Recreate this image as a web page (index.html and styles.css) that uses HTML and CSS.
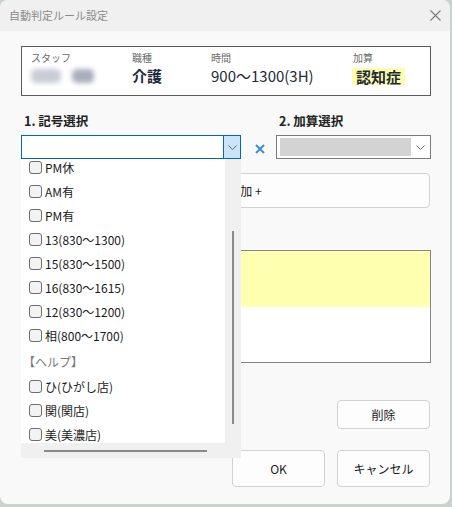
FILE: index.html
```html
<!DOCTYPE html>
<html lang="ja">
<head>
<meta charset="utf-8">
<title>自動判定ルール設定</title>
<link rel="stylesheet" href="styles.css">
</head>
<body>
<div class="window">
  <div class="titlebar">
    <span class="title">自動判定ルール設定</span>
    <svg class="close" width="11" height="11" viewBox="0 0 11 11"><path d="M0.5 0.5 L10.5 10.5 M10.5 0.5 L0.5 10.5" stroke="#7a7a7a" stroke-width="1.1" fill="none"/></svg>
  </div>
  <div class="content">
    <div class="info">
      <div class="col">
        <div class="lbl">スタッフ</div>
        <div class="val"><span class="blur b1"></span><span class="blur b2"></span></div>
      </div>
      <div class="col">
        <div class="lbl">職種</div>
        <div class="val bold">介護</div>
      </div>
      <div class="col">
        <div class="lbl">時間</div>
        <div class="val">900〜1300(3H)</div>
      </div>
      <div class="col">
        <div class="lbl">加算</div>
        <div class="val bold"><span class="hl">認知症</span></div>
      </div>
    </div>

    <div class="selectors">
      <div class="sel-label">1. 記号選択</div>
      <div></div>
      <div class="sel-label">2. 加算選択</div>
      <div class="combo active">
        <div class="combo-field"></div>
        <div class="combo-btn"><svg width="9" height="5" viewBox="0 0 9 5"><path d="M0.5 0.5 L4.5 4.5 L8.5 0.5" stroke="#5f6b78" stroke-width="1" fill="none"/></svg></div>
      </div>
      <div class="clear"><svg width="10" height="10" viewBox="0 0 10 10"><path d="M1 1 L9 9 M9 1 L1 9" stroke="#3c8fdc" stroke-width="2" fill="none"/></svg></div>
      <div class="combo">
        <div class="combo-field"><div class="placeholder"></div></div>
        <div class="combo-btn plain"><svg width="9" height="5" viewBox="0 0 9 5"><path d="M0.5 0.5 L4.5 4.5 L8.5 0.5" stroke="#6a6a6a" stroke-width="1" fill="none"/></svg></div>
      </div>
    </div>

    <button class="btn add">追加 +</button>

    <div class="listbox">
      <div class="lrow yellow"></div>
    </div>

    <div class="actions single">
      <button class="btn small">削除</button>
    </div>

    <div class="actions pair">
      <button class="btn big">OK</button>
      <button class="btn big">キャンセル</button>
    </div>
  </div>

  <div class="dropdown">
    <div class="dd-list">
      <div class="dd-items">
        <div class="item"><span class="cb"></span><span>PM休</span></div>
        <div class="item"><span class="cb"></span><span>AM有</span></div>
        <div class="item"><span class="cb"></span><span>PM有</span></div>
        <div class="item"><span class="cb"></span><span>13(830〜1300)</span></div>
        <div class="item"><span class="cb"></span><span>15(830〜1500)</span></div>
        <div class="item"><span class="cb"></span><span>16(830〜1615)</span></div>
        <div class="item"><span class="cb"></span><span>12(830〜1200)</span></div>
        <div class="item"><span class="cb"></span><span>相(800〜1700)</span></div>
        <div class="group">【ヘルプ】</div>
        <div class="item"><span class="cb"></span><span>ひ(ひがし店)</span></div>
        <div class="item"><span class="cb"></span><span>関(関店)</span></div>
        <div class="item"><span class="cb"></span><span>美(美濃店)</span></div>
      </div>
    </div>
    <div class="vscroll"><div class="vthumb"></div></div>
    <div class="hscroll"><div class="hthumb"></div></div>
    <div class="corner"></div>
  </div>
</div>
</body>
</html>
```

FILE: styles.css
```css
* { box-sizing: border-box; }

html, body {
  margin: 0;
  padding: 0;
}

body {
  width: 452px;
  height: 507px;
  background: #c9d2cc;
  font-family: "Noto Sans CJK JP", "Noto Sans", sans-serif;
  color: #1a1a1a;
  overflow: hidden;
}

.window {
  position: relative;
  width: 450px;
  height: 504px;
  background: #f9f9f9;
  border-radius: 8px;
  overflow: hidden;
}

.titlebar {
  height: 31px;
  background: #f0f0f0;
  display: flex;
  align-items: center;
  justify-content: space-between;
  padding: 0 9px 1px 9px;
}

.title {
  font-size: 11px;
  color: #8a8a8a;
  line-height: 14px;
  letter-spacing: 0;
}

.close {
  display: block;
  margin-right: 0;
}

.content {
  padding: 0 19px 0 21px;
  display: flex;
  flex-direction: column;
}

/* info box */
.info {
  margin-top: 15px;
  height: 50px;
  border: 1px solid #5c5c5c;
  background: #ffffff;
  display: grid;
  grid-template-columns: 101px 79px 142px 1fr;
  padding: 5px 0 0 9px;
}

.lbl {
  font-size: 10px;
  line-height: 12px;
  color: #6a6a6a;
}

.val {
  margin-top: 2px;
  height: 20px;
  font-size: 15px;
  line-height: 20px;
  color: #1f2b3c;
  display: flex;
  align-items: center;
  gap: 11px;
}

.val.bold { font-weight: 700; }

.blur {
  display: inline-block;
  height: 14px;
  border-radius: 5px;
  filter: blur(2.5px);
}
.b1 { width: 30px; background: #c9ccd6; }
.b2 { width: 22px; background: #a9aebb; }

.hl {
  display: inline-block;
  background: #ffffab;
  line-height: 17px;
  padding: 0 4px 0 4px;
  margin-left: -1px;
}

/* selectors */
.selectors {
  margin-top: 17px;
  display: grid;
  grid-template-columns: 220px 35px 155px;
  row-gap: 6px;
}

.sel-label {
  font-size: 12.5px;
  font-weight: 700;
  line-height: 16px;
  padding-left: 3px;
  color: #222;
}

.combo {
  height: 24px;
  border: 1px solid #7a7a7a;
  background: #ffffff;
  display: flex;
}

.combo.active { border-color: #0067c0; }

.combo-field {
  flex: 1;
  padding: 2px 3px;
}

.placeholder {
  height: 18px;
  width: 131px;
  background: #d3d3d3;
}

.combo-btn {
  width: 17px;
  display: flex;
  align-items: center;
  justify-content: center;
  background: #cce4f7;
  border-left: 1px solid #0067c0;
}

.combo-btn.plain {
  width: 20px;
  background: transparent;
  border-left: none;
  justify-content: flex-start;
  padding-left: 2px;
}

.clear {
  display: flex;
  align-items: center;
  padding-left: 14px;
  padding-top: 3px;
}

/* buttons */
.btn {
  font-family: "Noto Sans CJK JP", "Noto Sans", sans-serif;
  font-size: 12px;
  color: #1a1a1a;
  background: #fdfdfd;
  border: 1px solid #d2d2d2;
  border-radius: 4px;
  padding: 0;
}

.add {
  margin-top: 14px;
  height: 35px;
  width: 409px;
  padding-left: 39px;
  text-align: center;
}

.listbox {
  margin-top: 42px;
  height: 113px;
  border: 1px solid #858585;
  background: #ffffff;
}

.lrow.yellow {
  height: 56px;
  background: #ffffb0;
}

.actions {
  display: flex;
  justify-content: flex-end;
  gap: 12px;
  padding-right: 1px;
}

.actions.single { margin-top: 37px; }
.actions.pair { margin-top: 21px; }

.btn.small { width: 93px; height: 29px; }
.btn.big { width: 93px; height: 37px; }

/* dropdown overlay */
.dropdown {
  position: absolute;
  left: 21px;
  top: 159px;
  width: 220px;
  height: 299px;
  background: #f0f0f0;
  display: grid;
  grid-template-columns: 204px 16px;
  grid-template-rows: 284px 15px;
}

.dd-list {
  background: #ffffff;
  overflow: hidden;
}

.dd-items {
  margin-top: -4px;
}

.item {
  height: 24px;
  display: flex;
  align-items: center;
  padding-left: 8px;
  font-size: 12px;
  color: #1a1a1a;
  white-space: nowrap;
}

.cb {
  width: 13px;
  height: 13px;
  border: 1px solid #6e6e6e;
  border-radius: 3px;
  background: #f3f3f3;
  margin-right: 3px;
  flex: none;
}

.group {
  height: 27px;
  padding-top: 3px;
  line-height: 24px;
  padding-left: 2px;
  font-size: 12px;
  color: #7a7a7a;
}

.vscroll {
  padding: 72px 0 0 7px;
}

.vthumb {
  width: 2px;
  height: 193px;
  background: #8a8a8a;
}

.hscroll {
  padding: 7px 0 0 23px;
}

.hthumb {
  width: 163px;
  height: 2px;
  background: #8a8a8a;
}

.corner { background: #f0f0f0; }
```
